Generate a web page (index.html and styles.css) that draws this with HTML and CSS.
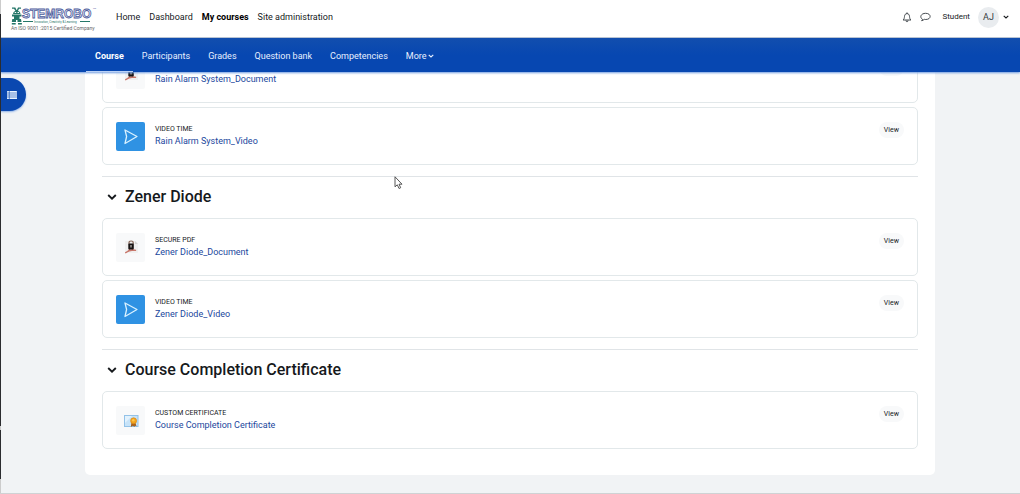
FILE: index.html
```html
<!DOCTYPE html>
<html lang="en">
<head>
<meta charset="utf-8">
<title>Course: My courses</title>
<link rel="stylesheet" href="styles.css">
</head>
<body>
<svg class="sprite" aria-hidden="true">
  <symbol id="chevron" viewBox="0 0 10 6"><path d="M1.2 1 5 4.6 8.8 1" fill="none" stroke="currentColor" stroke-width="1.9"/></symbol>
  <symbol id="video" viewBox="0 0 29 29"><path d="M9 8 21 14.5 9 21.5 10.6 14.5Z" fill="none" stroke="#d8f1ff" stroke-width="1.3" stroke-linejoin="round"/></symbol>
  <symbol id="pdf" viewBox="0 0 29 29">
    <path d="M9 8h10l3 3v9H9z" fill="#f0f0f0"/><path d="M19 8v3h3z" fill="#d5d5d5"/>
    <path d="M9.3 19.8c2-.3 5-3.300 5.600-6 .6 2.500 2.600 4 5.100 3.500-3.500-.8-7.500.2-10.700 2.500z" fill="none" stroke="#c8786c" stroke-width="1.300"/>
    <path d="M13 11V9.800c0-2.400 4.200-2.400 4.200 0V11" fill="none" stroke="#8a6a5c" stroke-width="1.200"/>
    <rect x="12.300" y="10.500" width="5.500" height="6" rx="1" fill="#171313"/><path d="M15 12v2.500" stroke="#e4dfda" stroke-width="1"/>
  </symbol>
  <symbol id="certificate" viewBox="0 0 29 29">
    <rect x="8.500" y="9.500" width="13.500" height="11" fill="#c7e3f8" stroke="#93c2e8"/><path d="M9 10h7L9 17z" fill="#e2f2fd"/>
    <path d="M15.500 16 14.800 21l2.100-1.200L18.500 21l.3-1.200 1.700.4-1.200-4z" fill="#a7601c"/><circle cx="17.600" cy="14.800" r="3" fill="#f3a51f" stroke="#d98a18" stroke-width=".7"/><circle cx="17.300" cy="14.300" r="1.200" fill="#ffc64c"/>
  </symbol>
</svg>
<header class="header">
  <div class="topbar">
    <a class="brand" href="#" aria-label="STEMROBO">
      <svg class="logo" viewBox="0 0 84 28">
        <g fill="#257769">
          <path d="M1 2.500h3.300L6 6H4.500L3 3.800H1zM10 2.500H7L5.500 6H7l1-2.200h2z"/>
          <path d="M2 9c0-4.500 7.500-4.500 7.500 0z"/><path d="M1 9.500h9.500v2H8.500V14H10l.5 3H6.500v-2H5v2H.8l.5-3H3v-2.500H1z"/>
          <path d="M.8 18h3.900v1.500H.8zM7 18h3.900v1.500H7z"/>
        </g>
        <path d="M3.700 7.500h1.500M6.500 7.500H8" stroke="#fff"/>
        <text class="logo-name" x="11" y="12.500">STEMROBO</text>
        <text class="logo-tm" x="82" y="4">TM</text>
        <path d="M12 16.500h10M69 16.500h10" stroke="#257769"/>
        <text class="logo-tagline" x="23" y="18">Innovation, Creativity &amp; Learning</text>
        <text class="logo-iso" x="0" y="25">An ISO 9001 :2015 Certified Company</text>
      </svg>
    </a>
    <nav class="primary" aria-label="Site">
      <a href="#">Home</a><a href="#">Dashboard</a><a class="current" href="#">My courses</a><a href="#">Site administration</a>
    </nav>
    <div class="user">
      <button class="icon-button" aria-label="Notifications"><svg width="10" height="11" viewBox="0 0 10 11" fill="none" stroke="#333a40" stroke-width=".9"><path d="M1 8c1.300-1 1.300-2 1.500-3.600C2.700 2.600 3.500 1.600 5 1.600s2.300 1 2.500 2.800C7.700 6 7.700 7 9 8z" stroke-linejoin="round"/><path d="M5 .4v1.200M4 8.400c0 1.900 2 1.900 2 0"/></svg></button>
      <button class="icon-button" aria-label="Messages"><svg width="11" height="10" viewBox="0 0 11 10" fill="none" stroke="#333a40" stroke-width=".9"><path d="M2.500 7.300C-.8 5.200 1 1.300 5.600 1.300c6 0 6 6.200.2 6.200-.7 0-1.100-.1-1.600-.2-.7.800-1.500 1.300-2.600 1.400.6-.5.800-.9.900-1.400z" stroke-linejoin="round"/></svg></button>
      <span class="role">Student</span>
      <button class="profile" aria-label="User menu"><span class="avatar">AJ</span><svg class="caret"><use href="#chevron"/></svg></button>
    </div>
  </div>
  <nav class="secondary" aria-label="Course">
    <a class="active" href="#">Course</a><a href="#">Participants</a><a href="#">Grades</a><a href="#">Question bank</a><a href="#">Competencies</a><a href="#">More<svg class="caret"><use href="#chevron"/></svg></a>
  </nav>
</header>
<button class="drawer-toggle" aria-label="Open course index"><svg width="10" height="8" viewBox="0 0 10 8"><rect width="10" height="8" rx=".6" fill="#e8f4ff"/><path d="M0 2h10M0 4h10M0 6h10M2.300 0v8" stroke="#0a48b0" stroke-width=".6"/></svg></button>
<main class="panel">
  <section class="section">
    <article class="activity">
      <svg class="thumb"><use href="#pdf"/></svg>
      <div class="info"><span class="kind">Secure PDF</span><a href="#">Rain Alarm System_Document</a></div>
      <button class="view">View</button>
    </article>
    <article class="activity">
      <svg class="thumb video"><use href="#video"/></svg>
      <div class="info"><span class="kind">Video Time</span><a href="#">Rain Alarm System_Video</a></div>
      <button class="view">View</button>
    </article>
  </section>
  <section class="section">
    <h2><button class="collapse" aria-label="Collapse"><svg><use href="#chevron"/></svg></button>Zener Diode</h2>
    <article class="activity">
      <svg class="thumb"><use href="#pdf"/></svg>
      <div class="info"><span class="kind">Secure PDF</span><a href="#">Zener Diode_Document</a></div>
      <button class="view">View</button>
    </article>
    <article class="activity">
      <svg class="thumb video"><use href="#video"/></svg>
      <div class="info"><span class="kind">Video Time</span><a href="#">Zener Diode_Video</a></div>
      <button class="view">View</button>
    </article>
  </section>
  <section class="section">
    <h2><button class="collapse" aria-label="Collapse"><svg><use href="#chevron"/></svg></button>Course Completion Certificate</h2>
    <article class="activity">
      <svg class="thumb"><use href="#certificate"/></svg>
      <div class="info"><span class="kind">Custom certificate</span><a href="#">Course Completion Certificate</a></div>
      <button class="view">View</button>
    </article>
  </section>
</main>
<div class="window-edge"></div>
<svg class="cursor" width="9" height="14" viewBox="0 0 9 14"><path d="M1 .8v10l2.300-2 1.700 3.700 1.700-.8L5 8.200h3z" fill="#fff" stroke="#444" stroke-width=".9"/></svg>
</body>
</html>
```
FILE: styles.css
```css
* { box-sizing: border-box; }

body {
  position: relative;
  min-height: 100vh;
  margin: 0;
  padding-bottom: 18px;
  overflow: hidden;
  border-bottom: 1px solid #cfd2d4;
  background: #f1f3f5;
  color: #16191c;
  font: 9px/12px Roboto, "Liberation Sans", sans-serif;
}

a { color: inherit; text-decoration: none; }
button { padding: 0; border: 0; background: none; color: inherit; font: inherit; }
svg { display: block; }
.sprite { position: absolute; width: 0; height: 0; }

.header { position: relative; z-index: 2; box-shadow: 0 1px 2px #6f9be0; }
.topbar {
  display: flex;
  align-items: center;
  height: 38px;
  padding: 0 11px 3px 11px;
  border-bottom: 1px solid #b9c4d3;
  background: #fff;
}
.logo { width: 84px; height: 28px; overflow: visible; }
.brand { margin-top: 4px; }
.logo-name { fill: #e8edf8; stroke: #4d5b9b; stroke-width: .8px; font: bold 12px "Liberation Sans", sans-serif; }
.logo-tm { fill: #4d5b9b; font-size: 2px; }
.logo-tagline { fill: #257769; font-size: 3px; }
.logo-iso { fill: #666; font-size: 5px; }
.primary { display: flex; gap: 9px; margin-left: 21px; }
.current { font-weight: bold; color: #000; }

.user { display: flex; align-items: center; margin-left: auto; }
.icon-button { margin-right: 8px; }
.role { margin: 0 8px 0 3px; font-size: 8px; }
.profile { display: flex; align-items: center; gap: 4px; }
.avatar { width: 21px; border-radius: 50%; background: #e9ecef; color: #343a40; line-height: 21px; text-align: center; }
.caret { width: 6px; height: 4px; }

.secondary {
  display: flex;
  height: 34px;
  padding-left: 86px;
  background: linear-gradient(#124eae, #0747b1 50%);
  color: #e7f0ff;
}
.secondary a { display: flex; align-items: center; gap: 1px; padding: 2px 9px 0; border-bottom: 1px solid transparent; }
.secondary .active { border-bottom-color: #b9d0f5; color: #fff; font-weight: bold; }

.drawer-toggle {
  position: absolute;
  top: 78px;
  left: 0;
  display: flex;
  align-items: center;
  width: 26px;
  height: 33px;
  padding-left: 7px;
  border-radius: 0 17px 17px 0;
  background: #0a48b0;
  box-shadow: 0 1px 2px #8fb2e8;
}

.panel {
  margin: -27px 85px 0;
  padding: 0 17px 26px;
  border-radius: 0 0 5px 5px;
  background: #fff;
}
.section { display: grid; gap: 4px; }
.section + .section { margin-top: 11px; border-top: 1px solid #e0e4e7; }
h2 { display: flex; align-items: center; height: 37px; margin: 0; padding: 3px 0 0 5px; font-size: 16px; line-height: 20px; font-weight: 500; }
.collapse { margin-right: 8px; }
.collapse svg { width: 10px; height: 6px; }

.activity {
  display: flex;
  align-items: flex-start;
  min-height: 58px;
  padding: 14px 13px 13px;
  border: 1px solid #e2e8ea;
  border-radius: 5px;
}
.thumb { width: 29px; height: 29px; border-radius: 2px; background: #f8f9fa; }
.thumb.video { background: #2f92e3; }
.info { display: grid; margin: 1px auto 0 10px; }
.info a { color: #1b479d; }
.kind { font-size: 7px; text-transform: uppercase; }
.view { padding: 2px 5px; border-radius: 8px; background: #f8f9fa; font-size: 7px; }

.window-edge {
  position: absolute;
  z-index: 3;
  inset: 0 auto 0 0;
  width: 1px;
  background: linear-gradient(#ccc 14px, #2b2c2f 14px, #2b2c2f 426px, #ccc 426px, #ccc 430px, #2b2c2f 430px, #2b2c2f 479px, #ccc 479px);
}
.cursor { position: absolute; top: 176px; left: 394px; }
```
